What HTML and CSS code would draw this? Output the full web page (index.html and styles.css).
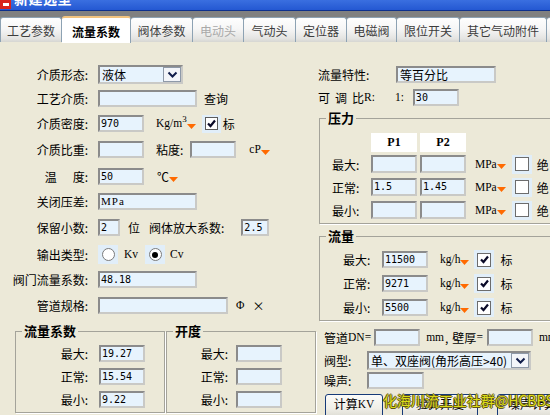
FILE: index.html
```html
<!DOCTYPE html>
<html lang="zh-CN">
<head>
<meta charset="utf-8">
<title>新建选型</title>
<link rel="stylesheet" href="styles.css">
</head>
<body>
<div class="window">
  <header class="titlebar">
    <span class="appicon"><span class="appicon-in"></span></span>
    <span class="title">新建选型</span>
  </header>
  <div class="band"></div>
  <nav class="tabs">
    <div class="tab first t62">工艺参数</div>
    <div class="tab active t69">流量系数</div>
    <div class="tab t62">阀体参数</div>
    <div class="tab disabled t51">电动头</div>
    <div class="tab t52">气动头</div>
    <div class="tab t51">定位器</div>
    <div class="tab t50">电磁阀</div>
    <div class="tab t63">限位开关</div>
    <div class="tab t87">其它气动附件</div>
    <div class="tab t20"></div>
  </nav>

  <main class="content">
    <section class="col-left">
      <div class="form">
        <div class="row">
          <span class="lbl">介质形态:</span>
          <div class="select sel-state"><span class="sel-text">液体</span><span class="dd"><svg viewBox="0 0 11 7"><path d="M1.5 1.5L5.5 5.5L9.5 1.5"/></svg></span></div>
        </div>
        <div class="row">
          <span class="lbl">工艺介质:</span>
          <div class="inp w99"></div>
          <span class="txt ml7">查询</span>
        </div>
        <div class="row">
          <span class="lbl">介质密度:</span>
          <div class="inp w46">970</div>
          <span class="unit ml12">Kg/m<sup class="sup">3</sup></span><svg class="tri" viewBox="0 0 9 5"><path d="M0 0H9L4.5 5Z"/></svg>
          <span class="chk ml6"><span class="box"><svg class="ck" viewBox="0 0 11 11"><path d="M2 5.5L4.5 8L9 2.5"/></svg></span></span>
          <span class="txt ml2">标</span>
        </div>
        <div class="row">
          <span class="lbl">介质比重:</span>
          <div class="inp w46"></div>
          <span class="txt ml12">粘度:</span>
          <div class="inp w46 ml7"></div>
          <span class="unit ml13">cP</span><svg class="tri" viewBox="0 0 9 5"><path d="M0 0H9L4.5 5Z"/></svg>
        </div>
        <div class="row">
          <span class="lbl">温<span class="gap16"></span>度:</span>
          <div class="inp w46">50</div>
          <span class="txt ml13">℃</span><svg class="tri" viewBox="0 0 9 5"><path d="M0 0H9L4.5 5Z"/></svg>
        </div>
        <div class="row">
          <span class="lbl">关闭压差:</span>
          <div class="inp w99 mono">MPa</div>
        </div>
        <div class="row">
          <span class="lbl">保留小数:</span>
          <div class="inp w22">2</div>
          <span class="txt ml8">位</span>
          <span class="txt ml9">阀体放大系数:</span>
          <div class="inp w28 ml17">2.5</div>
        </div>
        <div class="row">
          <span class="lbl">输出类型:</span>
          <span class="radio"><span class="circle"></span></span>
          <span class="unit ml6">Kv</span>
          <span class="radio ml7"><span class="circle on"></span></span>
          <span class="unit ml5">Cv</span>
        </div>
        <div class="row">
          <span class="lbl">阀门流量系数:</span>
          <div class="inp w99">48.18</div>
        </div>
        <div class="row">
          <span class="lbl">管道规格:</span>
          <div class="inp w130"></div>
          <span class="unit ml8">Φ</span>
          <span class="txt ml8">×</span>
        </div>
      </div>

      <div class="groups">
        <fieldset class="group g-kv">
          <legend>流量系数</legend>
          <div class="grow"><span class="glbl">最大:</span><div class="inp w46">19.27</div></div>
          <div class="grow"><span class="glbl">正常:</span><div class="inp w46">15.54</div></div>
          <div class="grow"><span class="glbl">最小:</span><div class="inp w46">9.22</div></div>
        </fieldset>
        <fieldset class="group g-open">
          <legend>开度</legend>
          <div class="grow"><span class="glbl">最大:</span><div class="inp w46"></div></div>
          <div class="grow"><span class="glbl">正常:</span><div class="inp w46"></div></div>
          <div class="grow"><span class="glbl">最小:</span><div class="inp w46"></div></div>
        </fieldset>
      </div>
    </section>

    <section class="col-right">
      <div class="rrow">
        <span class="rlbl">流量特性:</span>
        <div class="inp w100 cjk">等百分比</div>
      </div>
      <div class="rrow r2">
        <span class="txt"><span class="spaced">可调</span>比</span><span class="unit">R:</span>
        <span class="unit ml20">1:</span>
        <div class="inp w46 ml9">30</div>
      </div>

      <fieldset class="group g-press">
        <legend>压力</legend>
        <div class="phead">
          <span class="hcell">P1</span>
          <span class="hcell">P2</span>
        </div>
        <div class="prow"><span class="plbl">最大:</span><div class="inp w46 h18"></div><div class="inp w46 h18 ml3"></div><span class="unit ml9">MPa</span><svg class="tri" viewBox="0 0 9 5"><path d="M0 0H9L4.5 5Z"/></svg><span class="chk big ml6"><span class="box"></span></span><span class="txt ml5">绝</span></div>
        <div class="prow"><span class="plbl">正常:</span><div class="inp w46 h18">1.5</div><div class="inp w46 h18 ml3">1.45</div><span class="unit ml9">MPa</span><svg class="tri" viewBox="0 0 9 5"><path d="M0 0H9L4.5 5Z"/></svg><span class="chk big ml6"><span class="box"></span></span><span class="txt ml5">绝</span></div>
        <div class="prow"><span class="plbl">最小:</span><div class="inp w46 h18"></div><div class="inp w46 h18 ml3"></div><span class="unit ml9">MPa</span><svg class="tri" viewBox="0 0 9 5"><path d="M0 0H9L4.5 5Z"/></svg><span class="chk big ml6"><span class="box"></span></span><span class="txt ml5">绝</span></div>
      </fieldset>

      <fieldset class="group g-flow">
        <legend>流量</legend>
        <div class="frow"><span class="plbl">最大:</span><div class="inp w46">11500</div><span class="unit ml12">kg/h</span><svg class="tri" viewBox="0 0 9 5"><path d="M0 0H9L4.5 5Z"/></svg><span class="chk big ml5"><span class="box"><svg class="ck" viewBox="0 0 11 11"><path d="M2 5.5L4.5 8L9 2.5"/></svg></span></span><span class="txt ml6">标</span></div>
        <div class="frow"><span class="plbl">正常:</span><div class="inp w46">9271</div><span class="unit ml12">kg/h</span><svg class="tri" viewBox="0 0 9 5"><path d="M0 0H9L4.5 5Z"/></svg><span class="chk big ml5"><span class="box"><svg class="ck" viewBox="0 0 11 11"><path d="M2 5.5L4.5 8L9 2.5"/></svg></span></span><span class="txt ml6">标</span></div>
        <div class="frow"><span class="plbl">最小:</span><div class="inp w46">5500</div><span class="unit ml12">kg/h</span><svg class="tri" viewBox="0 0 9 5"><path d="M0 0H9L4.5 5Z"/></svg><span class="chk big ml5"><span class="box"><svg class="ck" viewBox="0 0 11 11"><path d="M2 5.5L4.5 8L9 2.5"/></svg></span></span><span class="txt ml6">标</span></div>
      </fieldset>

      <div class="rrow dn">
        <span class="txt">管道</span><span class="unit">DN=</span>
        <div class="inp w46 ml3"></div>
        <span class="unit ml6">mm</span><span class="txt comma">,</span><span class="txt">壁厚</span><span class="unit">=</span>
        <div class="inp w46 ml4"></div>
        <span class="unit ml6">mm</span>
      </div>
      <div class="rrow vt">
        <span class="blbl">阀型:</span>
        <div class="select sel-type"><span class="sel-text">单、双座阀(角形高压&gt;40)</span><span class="dd"><svg viewBox="0 0 11 7"><path d="M1.5 1.5L5.5 5.5L9.5 1.5"/></svg></span></div>
      </div>
      <div class="rrow ns">
        <span class="blbl">噪声:</span>
        <div class="inp w57"></div>
      </div>
      <div class="buttons">
        <button class="btn b1">计算<span class="unit">KV</span></button>
        <button class="btn b2">验算开度</button>
        <button class="btn b3">噪声计算</button>
      </div>
    </section>
  </main>

  <div class="watermark">化海川流工业社群@HCBBS</div>
</div>
</body>
</html>
```

FILE: styles.css
```css
* { box-sizing: border-box; }
html, body { margin: 0; padding: 0; }
body {
  width: 550px;
  height: 415px;
  overflow: hidden;
  background: #ece9d8;
  font-family: "Noto Sans CJK SC", "Noto Sans", sans-serif;
  font-size: 12px;
  color: #000;
}
.window { position: relative; width: 550px; height: 415px; overflow: hidden; background: #ece9d8; }

/* title bar */
.titlebar {
  height: 11px;
  background: linear-gradient(#3a6fe0, #2458d2);
  border-bottom: 1px solid #0c2f8c;
  display: flex;
  align-items: flex-start;
  overflow: hidden;
}
.appicon {
  width: 11px; height: 12px; margin-top: -3px;
  background: #d8231c;
  display: flex; align-items: center; justify-content: center;
}
.appicon-in { width: 6px; height: 3px; background: #fff; margin-top: 3px; }
.title {
  color: #fff;
  font-weight: bold;
  font-size: 14px;
  line-height: 16px;
  margin-top: -10px;
  margin-left: 3px;
  letter-spacing: 0.5px;
}
.band { height: 6px; background: #808080; }

/* tabs */
.tabs {
  height: 25px;
  display: flex;
  align-items: flex-start;
  background: #808080;
  position: relative;
  z-index: 2;
}
.tab {
  flex: none;
  height: 25px;
  border: 1px solid #8da2b3;
  border-left: none;
  border-bottom: none;
  border-radius: 3px 3px 0 0;
  background: linear-gradient(#fefefe, #f6f6f6 45%, #e4e4e2 85%, #d6d6d2);
  color: #3c3c3c;
  display: flex;
  align-items: center;
  justify-content: center;
  padding-top: 2px;
  line-height: 14px;
}
.tab.first { border-left: 1px solid #8da2b3; }
.tab.disabled { color: #a9a9a9; }
.tab.active {
  height: 27px;
  margin-top: -1px;
  background: #fff;
  color: #000;
  font-weight: bold;
  border-top: 2px solid #f2c37e;
}
.t62 { width: 62px; } .t69 { width: 69px; } .t51 { width: 51px; } .t52 { width: 52px; }
.t50 { width: 50px; } .t63 { width: 63px; } .t87 { width: 87px; } .t20 { width: 20px; }

/* content */
.content { display: flex; height: 373px; }
.col-left { width: 318px; flex: none; }
.col-right { flex: 1; min-width: 0; padding-top: 24px; }

.form {
  display: grid;
  grid-template-rows: 24px 25px 26px 27px 25px 26px 27px 25px 26px 17px;
  align-items: start;
  padding-top: 24px;
}
.row, .rrow, .grow, .prow, .frow {
  display: flex;
  align-items: center;
  height: 17px;
  white-space: nowrap;
}
.lbl { width: 88px; text-align: right; flex: none; margin-right: 10px; line-height: 17px; }
.gap16 { display: inline-block; width: 16px; }
.txt { line-height: 17px; }
.comma { margin: 0 4px 0 1px; }

/* inputs */
.inp {
  flex: none;
  height: 17px;
  background: #e7f3fd;
  border: 2px solid;
  border-color: #8b8b8b #c9c9c6 #c9c9c6 #8b8b8b;
  font-family: "DejaVu Sans Mono", monospace;
  font-size: 10px;
  line-height: 13px;
  padding-left: 1px;
  color: #000;
  overflow: hidden;
}
.inp.cjk { font-family: "Noto Sans CJK SC", sans-serif; font-size: 12px; line-height: 13px; padding-left: 2px; }
.inp.mono { font-family: "Liberation Serif", serif; font-size: 11px; letter-spacing: 1px; }
.h18 { height: 18px; }
.w22 { width: 22px; } .w28 { width: 28px; } .w46 { width: 46px; } .w57 { width: 57px; }
.w99 { width: 99px; } .w100 { width: 100px; } .w130 { width: 130px; }

.ml2 { margin-left: 2px; } .ml3 { margin-left: 3px; } .ml4 { margin-left: 4px; } .ml5 { margin-left: 5px; }
.ml6 { margin-left: 6px; } .ml7 { margin-left: 7px; } .ml8 { margin-left: 8px; } .ml9 { margin-left: 9px; }
.ml10 { margin-left: 10px; } .ml12 { margin-left: 12px; } .ml13 { margin-left: 13px; } .ml17 { margin-left: 17px; }
.ml20 { margin-left: 20px; }

.unit {
  font-family: "Liberation Serif", serif;
  font-size: 11.5px;
  line-height: 17px;
  color: #000;
}
.sup { font-size: 9px; vertical-align: 5px; line-height: 0; }
.tri { width: 9px; height: 5px; flex: none; margin-top: 5px; fill: #ff6a00; }

/* select */
.select {
  flex: none;
  height: 19px;
  background: #e7f3fd;
  border: 2px solid;
  border-color: #8b8b8b #c9c9c6 #c9c9c6 #8b8b8b;
  display: flex;
  align-items: center;
  padding-left: 2px;
}
.sel-state { width: 85px; }
.sel-type { width: 164px; }
.sel-text { line-height: 15px; white-space: nowrap; overflow: hidden; }
.dd {
  margin-left: auto;
  width: 18px; height: 15px;
  background: #f3f5f9;
  border: 1px solid #8e99a8;
  display: flex; align-items: center; justify-content: center;
  flex: none;
}
.dd svg { width: 11px; height: 7px; fill: none; stroke: #101c4a; stroke-width: 2; }

/* checkbox / radio */
.chk {
  flex: none;
  width: 19px; height: 18px;
  background: #e1eef9;
  display: flex; align-items: center; justify-content: center;
}
.chk.big { width: 20px; height: 19px; }
.chk .box {
  width: 13px; height: 13px;
  background: #fff;
  border: 1px solid #5c5c5c;
  display: flex; align-items: center; justify-content: center;
}
.chk.big .box { width: 14px; height: 14px; border-color: #6c6c6c; }
.ck { width: 11px; height: 11px; fill: none; stroke: #0a0a28; stroke-width: 2.2; }

.radio {
  flex: none;
  width: 20px; height: 19px;
  background: #e1eef9;
  display: flex; align-items: center; justify-content: center;
}
.circle {
  width: 13px; height: 13px;
  border-radius: 50%;
  border: 1px solid #7a7a7a;
  background: #fff;
  display: flex; align-items: center; justify-content: center;
}
.circle.on::after {
  content: "";
  width: 6px; height: 6px; border-radius: 50%;
  background: #000;
}

/* group boxes */
.group {
  margin: 0;
  padding: 0;
  min-width: 0;
  border: 1px solid #a4a39a;
  box-shadow: 1px 1px 0 #fff;
}
.group legend {
  margin-left: 6px;
  padding: 0 2px;
  font-size: 13px;
  line-height: 14px;
  font-weight: bold;
}
.groups { display: flex; margin-top: 10px; }
.g-kv { width: 150px; margin-left: 15px; padding: 7px 0 4px; }
.g-open { width: 150px; margin-left: 1px; padding: 7px 0 4px; }
.g-kv .grow + .grow, .g-open .grow + .grow { margin-top: 6px; }
.glbl { text-align: right; line-height: 17px; flex: none; }
.g-kv .glbl { width: 72px; margin-right: 11px; }
.g-open .glbl { width: 61px; margin-right: 8px; }

/* right column */
.rlbl { width: 78px; flex: none; line-height: 17px; }
.r2 { margin-top: 6px; }
.spaced { letter-spacing: 5px; }

.g-press { width: 245px; margin-left: 1px; margin-top: 5px; padding: 8px 0 4px 12px; }
.g-press legend { margin-left: -6px; }
.phead { display: flex; padding-left: 39px; height: 19px; gap: 3px; }
.hcell {
  width: 46px; height: 19px;
  background: #fff;
  font-family: "Liberation Serif", serif;
  font-weight: bold;
  font-size: 12px;
  display: flex; align-items: center; justify-content: center;
  line-height: 19px;
}
.prow { height: 18px; margin-top: 5px; }
.phead + .prow { margin-top: 3px; }
.plbl { width: 39px; flex: none; line-height: 17px; }

.g-flow { width: 245px; margin-left: 1px; margin-top: 5px; padding: 8px 0 4px 23px; }
.g-flow legend { margin-left: -17px; }
.frow + .frow { margin-top: 7px; }

.dn { margin-top: 8px; padding-left: 6px; }
.vt { margin-top: 5px; height: 19px; padding-left: 6px; }
.ns { margin-top: 2px; padding-left: 6px; }
.blbl { width: 43px; flex: none; line-height: 17px; }

.buttons { display: flex; margin-top: 5px; padding-left: 7px; gap: 19px; }
.btn {
  flex: none;
  height: 24px;
  border: 1px solid #163a78;
  border-radius: 3px;
  background: linear-gradient(#fbfbf9, #f0efe8 60%, #dcdbd2);
  font-family: "Noto Sans CJK SC", sans-serif;
  font-size: 12px;
  line-height: 16px;
  color: #000;
  padding: 1px 0 0;
  display: flex;
  justify-content: center;
  align-items: flex-start;
}
.btn .unit { line-height: 16px; }
.b1 { width: 58px; }
.b2 { width: 76px; }
.b3 { width: 70px; }

/* watermark overlay */
.watermark {
  position: absolute;
  left: 383px;
  top: 392px;
  font-family: "Noto Sans CJK SC", sans-serif;
  font-size: 14px;
  line-height: 16px;
  color: #dcdc18;
  white-space: nowrap;
  text-shadow: 1px 0 #5f5418, -1px 0 #5f5418, 0 1px #5f5418, 0 -1px #5f5418;
  z-index: 5;
}
```
